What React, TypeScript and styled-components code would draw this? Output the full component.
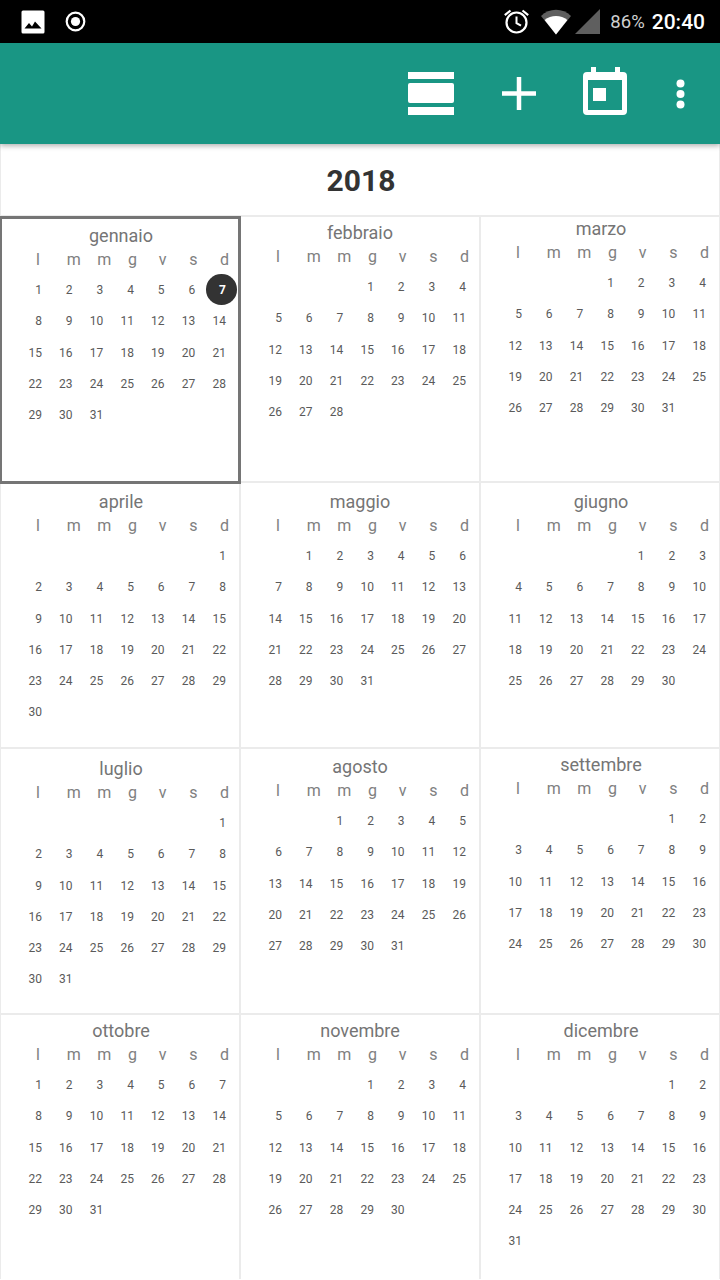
import styled, { createGlobalStyle } from 'styled-components';

const GlobalStyle = createGlobalStyle`
  html, body {
    margin: 0;
    padding: 0;
    background: #fff;
    overflow: hidden;
  }
  * {
    box-sizing: border-box;
  }
`;

const months = [
  { name: 'gennaio', blanks: 0, days: 31, top: 9, selected: 7 },
  { name: 'febbraio', blanks: 3, days: 28, top: 6 },
  { name: 'marzo', blanks: 3, days: 31, top: 2 },
  { name: 'aprile', blanks: 6, days: 30, top: 9 },
  { name: 'maggio', blanks: 1, days: 31, top: 9 },
  { name: 'giugno', blanks: 4, days: 30, top: 9 },
  { name: 'luglio', blanks: 6, days: 31, top: 10 },
  { name: 'agosto', blanks: 2, days: 31, top: 8 },
  { name: 'settembre', blanks: 5, days: 30, top: 6 },
  { name: 'ottobre', blanks: 0, days: 31, top: 6 },
  { name: 'novembre', blanks: 3, days: 30, top: 6 },
  { name: 'dicembre', blanks: 5, days: 31, top: 6 },
];

const weekdays = ['l', 'm', 'm', 'g', 'v', 's', 'd'];

const Screen = styled.div`
  width: 720px;
  height: 1280px;
  overflow: hidden;
  display: flex;
  flex-direction: column;
  font-family: Roboto, "Liberation Sans", sans-serif;
`;

const StatusBar = styled.div`
  height: 43px;
  flex: none;
  background: #000;
  color: #fff;
  display: flex;
  align-items: center;
  padding: 0 15px 0 21px;
`;

const StatusLeft = styled.div`
  display: flex;
  align-items: center;
  gap: 20px;
  flex: 1;
`;

const StatusRight = styled.div`
  display: flex;
  align-items: center;
`;

const StatusIcon = styled.svg<{ $gap?: number }>`
  display: block;
  margin-left: ${(p) => p.$gap ?? 0}px;
`;

const Battery = styled.span`
  font-size: 18.5px;
  color: #cfcfcf;
  margin: 0 7px 0 10px;
`;

const Clock = styled.span`
  font-size: 21px;
  font-weight: 500;
`;

const Toolbar = styled.div`
  height: 101px;
  flex: none;
  background: #199684;
  box-shadow: 0 2px 5px rgba(0, 0, 0, 0.3);
  position: relative;
  z-index: 1;
  display: flex;
  align-items: center;
  justify-content: flex-end;
  padding-right: 35px;
`;

const ToolIcon = styled.svg<{ $gap: number; $lift?: number }>`
  display: block;
  margin-left: ${(p) => p.$gap}px;
  margin-bottom: ${(p) => p.$lift ?? 0}px;
  fill: #fff;
`;

const YearBar = styled.div`
  height: 71px;
  flex: none;
  display: flex;
  align-items: center;
  justify-content: center;
  padding: 2px 0 0 2px;
  border-left: 1px solid #ebebeb;
  border-right: 1px solid #ebebeb;
  font-size: 30px;
  font-weight: 700;
  color: #333;
`;

const YearGrid = styled.div`
  display: grid;
  grid-template-columns: repeat(3, 240px);
  grid-auto-rows: 266px;
  width: 722px;
  margin-left: -1px;
  border-right: 2px solid #ebebeb;
`;

const MonthName = styled.div`
  height: 20px;
  line-height: 20px;
  text-align: center;
  font-size: 18px;
  color: #757575;
`;

const MonthCell = styled.div<{ $top: number; $current?: boolean }>`
  position: relative;
  padding-top: ${(p) => p.$top}px;
  border-top: 2px solid #ebebeb;
  border-left: 2px solid #ebebeb;

  /* outer columns sit a pixel right of centre */
  &:not(:nth-child(3n + 2)) ${MonthName} {
    padding-left: 2px;
  }

  ${(p) =>
    p.$current &&
    `
    &::after {
      content: '';
      position: absolute;
      top: -1px;
      left: -2px;
      right: -2px;
      bottom: -3px;
      border: 3px solid #757575;
      z-index: 1;
    }
  `}
`;

const WeekRow = styled.div`
  display: grid;
  grid-template-columns: repeat(6, 30.67px) 1fr;
  padding-left: 35px;
  height: 22px;
  margin-top: 3px;
  line-height: 22px;
  font-size: 16px;
  color: #808080;
`;

const DayGrid = styled.div`
  display: grid;
  grid-template-columns: repeat(7, 30.67px);
  grid-auto-rows: 31.3px;
  padding-left: 10.3px;
  margin-top: 3.3px;
`;

const Day = styled.div<{ $selected?: boolean }>`
  position: relative;
  display: flex;
  align-items: center;
  justify-content: flex-end;
  font-size: 12px;
  color: #5a5a5a;
  ${(p) =>
    p.$selected &&
    `
    color: #fff;
    font-weight: 700;
    z-index: 0;
    &::before {
      content: '';
      position: absolute;
      right: -11px;
      top: 0;
      width: 30.5px;
      height: 30.5px;
      border-radius: 50%;
      background: #333;
      z-index: -1;
    }
  `}
`;

export default function App() {
  return (
    <Screen>
      <GlobalStyle />
      <StatusBar>
        <StatusLeft>
          <svg width="24" height="24" viewBox="0 0 24 24">
            <rect x="0.5" y="0.5" width="23" height="23" rx="1.5" fill="#fff" />
            <path d="M3.5 18.5 8 13l3 3.5 3-5 6.5 7z" fill="#000" />
          </svg>
          <svg width="21" height="21" viewBox="0 0 21 21">
            <circle cx="10.5" cy="10.5" r="8.8" fill="none" stroke="#fff" strokeWidth="2.2" />
            <circle cx="10.5" cy="10.5" r="4.6" fill="#fff" />
          </svg>
        </StatusLeft>
        <StatusRight>
          <StatusIcon width="27" height="27" viewBox="0 0 27 27">
            <circle cx="13.5" cy="14.5" r="10" fill="none" stroke="#fff" strokeWidth="2.2" />
            <path d="M13.5 8.5v6.6l4.5 2.6" fill="none" stroke="#fff" strokeWidth="2" />
            <path d="M7.5 2.5 1.8 7.2M19.5 2.5l5.7 4.7" fill="none" stroke="#fff" strokeWidth="2.2" />
          </StatusIcon>
          <StatusIcon $gap={11} width="30" height="26" viewBox="0 0 30 26">
            <path d="M0 7C8 -1.5 22 -1.5 30 7L15 25.5z" fill="#5f5f5f" />
            <path d="M3.6 11C10 5.6 20 5.6 26.4 11L15 25.5z" fill="#fff" />
          </StatusIcon>
          <StatusIcon $gap={4} width="25" height="25" viewBox="0 0 25 25">
            <path d="M0 25 25 0v25z" fill="#5f5f5f" />
          </StatusIcon>
          <Battery>86%</Battery>
          <Clock>20:40</Clock>
        </StatusRight>
      </StatusBar>
      <Toolbar>
        <ToolIcon $gap={0} width="46" height="43" viewBox="0 0 46 43">
          <rect width="46" height="7" />
          <rect y="11" width="46" height="20" rx="2" />
          <rect y="35" width="46" height="8" />
        </ToolIcon>
        <ToolIcon $gap={48} width="34" height="33" viewBox="0 0 34 33">
          <path d="M14.75 0h4.5v14.25H34v4.5H19.25V33h-4.5V18.75H0v-4.5h14.75z" />
        </ToolIcon>
        <ToolIcon $gap={47} $lift={5} width="44" height="48" viewBox="0 0 44 48">
          <path d="M8 0h5v5h19V0h5v5h3a4 4 0 0 1 4 4v35a4 4 0 0 1-4 4H4a4 4 0 0 1-4-4V9a4 4 0 0 1 4-4h4zM5 13v30h34V13z" fillRule="evenodd" />
          <rect x="10" y="21" width="13" height="13" />
        </ToolIcon>
        <ToolIcon $gap={49} width="9" height="30" viewBox="0 0 9 30">
          <circle cx="4.5" cy="4.5" r="4" />
          <circle cx="4.5" cy="15" r="4" />
          <circle cx="4.5" cy="25.5" r="4" />
        </ToolIcon>
      </Toolbar>
      <YearBar>2018</YearBar>
      <YearGrid>
        {months.map((month) => (
          <MonthCell key={month.name} $top={month.top} $current={month.selected !== undefined}>
            <MonthName>{month.name}</MonthName>
            <WeekRow>
              {weekdays.map((d, i) => (
                <span key={i}>{d}</span>
              ))}
            </WeekRow>
            <DayGrid>
              {Array.from({ length: month.blanks }, (_, i) => (
                <span key={`b${i}`} />
              ))}
              {Array.from({ length: month.days }, (_, i) => (
                <Day key={i} $selected={month.selected === i + 1}>
                  {i + 1}
                </Day>
              ))}
            </DayGrid>
          </MonthCell>
        ))}
      </YearGrid>
    </Screen>
  );
}
